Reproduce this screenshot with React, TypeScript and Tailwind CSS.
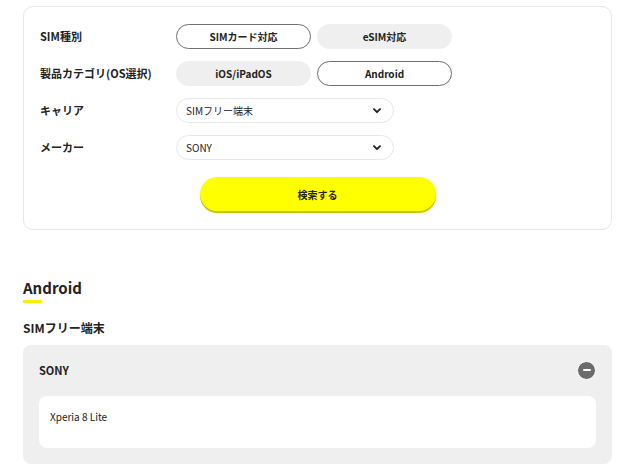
import React from 'react';

const font = { fontFamily: '"Noto Sans CJK JP", "Noto Sans", sans-serif' };

const Chevron = () => (
  <svg width="8" height="6" viewBox="0 0 8 6" className="text-[#222]">
    <path d="M1 1.2l3 3 3-3" fill="none" stroke="currentColor" strokeWidth="1.9" strokeLinecap="round" strokeLinejoin="round" />
  </svg>
);

const Pill: React.FC<{ label: string; active?: boolean }> = ({ label, active }) => (
  <button
    className={`w-[135px] h-[25px] rounded-full text-[10px] font-bold text-[#222] flex items-center justify-center ${
      active ? 'bg-white border border-[#707070]' : 'bg-[#efefef] border border-[#efefef]'
    }`}
  >
    {label}
  </button>
);

const Select: React.FC<{ value: string }> = ({ value }) => (
  <div className="w-[218px] h-[25px] rounded-full border border-[#e8e8e8] bg-white flex items-center justify-between pl-[9px] pr-[12px] text-[10px] text-[#222]">
    <span>{value}</span>
    <Chevron />
  </div>
);

const Row: React.FC<{ label: string; children: React.ReactNode }> = ({ label, children }) => (
  <div className="flex items-center h-[25px]">
    <div className="w-[136px] text-[11px] font-bold text-[#222]">{label}</div>
    <div className="flex gap-[6px]">{children}</div>
  </div>
);

export default function App() {
  return (
    <div className="w-[640px] h-[464px] overflow-hidden bg-white pl-[23px] pr-[28px] pt-[6px]" style={font}>
      {/* search form */}
      <div className="border border-[#e6e6e6] rounded-[10px] pl-[16px] pt-[17px] pb-[18px]">
        <div className="flex flex-col gap-[12px]">
          <Row label="SIM種別">
            <Pill label="SIMカード対応" active />
            <Pill label="eSIM対応" />
          </Row>
          <Row label="製品カテゴリ(OS選択)">
            <Pill label="iOS/iPadOS" />
            <Pill label="Android" active />
          </Row>
          <Row label="キャリア">
            <Select value="SIMフリー端末" />
          </Row>
          <Row label="メーカー">
            <Select value="SONY" />
          </Row>
        </div>
        <div className="flex justify-center pr-[16px] mt-[17px]">
          <button className="w-[236px] h-[34px] rounded-full bg-[#ffff00] shadow-[0_2px_0_#c9c400] text-[10px] font-bold text-[#222]">
            検索する
          </button>
        </div>
      </div>

      {/* results */}
      <div className="mt-[47px]">
        <h2 className="text-[15px] font-bold text-[#222] leading-[22px]">Android</h2>
        <div className="w-[19px] h-[3px] bg-[#ffee00] mt-[1px]" />
        <h3 className="text-[12px] font-bold text-[#222] mt-[16px] leading-[18px]">SIMフリー端末</h3>
        <div className="mt-[8px] bg-[#efefef] rounded-[8px] px-[16px] pt-[15px] pb-[16px]">
          <div className="flex items-center justify-between h-[20px]">
            <span className="text-[11px] font-bold text-[#222]">SONY</span>
            <span className="w-[19px] h-[19px] rounded-full bg-[#6b6b6b] border border-white flex items-center justify-center">
              <span className="w-[8px] h-[2px] bg-white rounded-sm" />
            </span>
          </div>
          <div className="mt-[16px] bg-white rounded-[8px] h-[52px] pl-[11px] pt-[13px] text-[10px] text-[#222]">
            Xperia 8 Lite
          </div>
        </div>
      </div>
    </div>
  );
}
